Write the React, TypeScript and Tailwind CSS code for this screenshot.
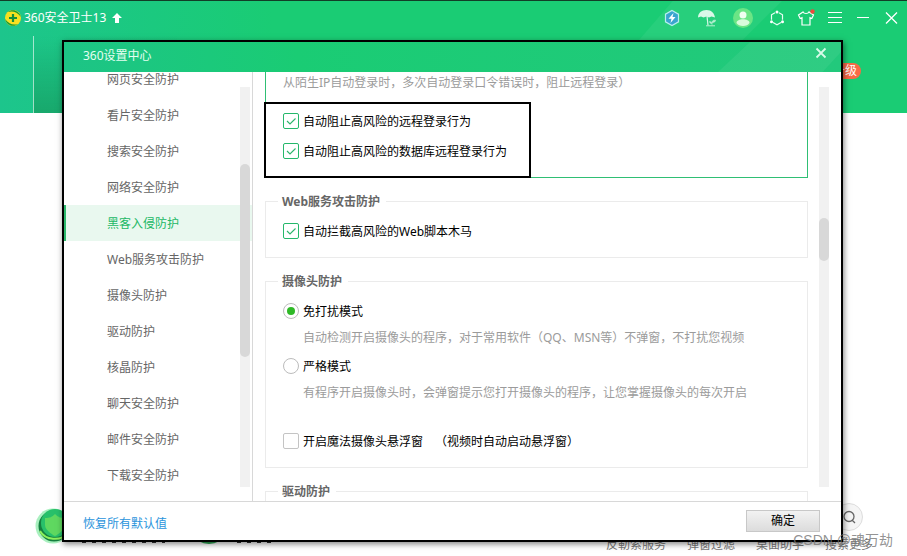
import type { ReactNode } from "react";

const navItems = [
    "网页安全防护",
    "看片安全防护",
    "搜索安全防护",
    "网络安全防护",
    "黑客入侵防护",
    "Web服务攻击防护",
    "摄像头防护",
    "驱动防护",
    "核晶防护",
    "聊天安全防护",
    "邮件安全防护",
    "下载安全防护",
];

function Check({ label, note, checked = false }: { label: string; note?: string; checked?: boolean }) {
    return (
        <label className="flex h-4 items-center gap-1 text-black">
            <span className="relative flex size-4 shrink-0">
                <input
                    type="checkbox"
                    defaultChecked={checked}
                    className="peer size-4 appearance-none rounded-xs border border-[#c4c4c4] bg-white checked:border-[#25b86b]"
                />
                <svg viewBox="0 0 16 16" className="pointer-events-none absolute inset-0 hidden size-4 peer-checked:block">
                    <path d="M4 8l3 3 5.5-5.500" fill="none" stroke="#2cb56c" strokeWidth="1.100" />
                </svg>
            </span>
            <span className="pt-0.5">{label}</span>
            {note && <span className="ml-2 pt-0.5">{note}</span>}
        </label>
    );
}

function Mode({ label, hint, checked = false }: { label: string; hint: string; checked?: boolean }) {
    return (
        <div>
            <label className="flex h-4 items-center gap-1 text-black">
                <span className="relative flex size-4 shrink-0">
                    <input
                        type="radio"
                        name="camera-mode"
                        defaultChecked={checked}
                        className="peer size-4 appearance-none rounded-full border border-[#bcbcbc] bg-white"
                    />
                    <span className="pointer-events-none absolute inset-1 hidden rounded-full bg-[#2fb927] peer-checked:block" />
                </span>
                <span className="pt-0.5">{label}</span>
            </label>
            <p className="mt-[11px] pl-5 text-[#9b9b9b]">{hint}</p>
        </div>
    );
}

function Group({ title, children }: { title: string; children?: ReactNode }) {
    return (
        <fieldset className="border border-[#ebebeb] px-[17px]">
            <legend className="-ml-[5px] px-1 pr-1.5 pt-0.5 font-bold text-[#666]">{title}</legend>
            {children}
        </fieldset>
    );
}

function TitleBar() {
    return (
        <header className="flex h-[34px] items-center justify-between pl-1 pr-2 text-white">
            <div className="flex items-center gap-0.5">
                <svg viewBox="0 0 18 18" className="size-[18px]">
                    <circle cx="9" cy="9" r="8" fill="#f7e021" />
                    <path d="M4 3C8-.5 15 1 17 8C13 3 9 1.500 4 3zM14 15C10 18.500 3 17 1 10C5 15 9 16.500 14 15z" fill="#159a36" />
                    <path d="M9 5v8M5 9h8" stroke="#14903a" strokeWidth="2.200" />
                </svg>
                <h1>360安全卫士13</h1>
                <svg viewBox="0 0 10 10" className="ml-1 size-[10px]">
                    <path d="M5 0l5 5H7v5H3V5H0z" fill="white" />
                </svg>
            </div>
            <div className="flex items-center gap-3">
                <button type="button" aria-label="加速" className="mr-1">
                    <svg viewBox="0 0 18 18" className="size-[18px]">
                        <path d="M9 1.500l6.500 3.700v7.600L9 16.500l-6.500-3.700V5.200z" fill="#3aa5cf" stroke="#b9eef0" strokeWidth="1.200" />
                        <path d="M10.500 4L5.500 9.800h3L7.500 14l5-6h-3z" fill="white" />
                    </svg>
                </button>
                <button type="button" aria-label="保护伞" className="mr-1">
                    <svg viewBox="0 0 20 18" className="h-[18px] w-5">
                        <path d="M1 8.500C1 4 4.500 1 9.500 1S17.500 4.500 18 8.500L14.500 7.500 12 8.500 9.500 7.500 6.500 8.500 4 7.500z" fill="#d9f8e8" />
                        <path d="M10 7l1 9.500" stroke="#d9f8e8" strokeWidth="1.200" />
                        <path d="M9 16.800h9" stroke="#b6efd1" />
                        <path d="M15 16.500v-3.500M15 14.500c-2 0-2.500-1-2.500-2 1.500 0 2.500.7 2.500 2zM15 13.500c0-1.800 1.500-2.500 3.500-2.500 0 1.800-1.200 2.700-3.500 2.500z" fill="#b6efd1" stroke="#b6efd1" strokeWidth="0.600" />
                    </svg>
                </button>
                <button type="button" aria-label="账户" className="mr-1">
                    <svg viewBox="0 0 20 20" className="size-5">
                        <circle cx="10" cy="10" r="10" fill="#6be585" />
                        <circle cx="10" cy="7" r="3.500" fill="#effff0" />
                        <path d="M3.500 15c0-5 13-5 13 0-2 4-11 4-13 0z" fill="#d8fbdc" />
                    </svg>
                </button>
                <button type="button" aria-label="社区">
                    <svg viewBox="0 0 16 16" className="size-4">
                        <path d="M6 2.800L2.500 4.800v5M4 12.500L8 14.700l4-2.200M13.500 9.800v-5L10 2.800" fill="none" stroke="#e8fff4" strokeWidth="1.200" />
                        <g fill="white">
                            <circle cx="8" cy="2" r="1.500" />
                            <circle cx="2.500" cy="11.800" r="1.500" />
                            <circle cx="13.500" cy="11.800" r="1.500" />
                        </g>
                    </svg>
                </button>
                <button type="button" aria-label="换肤">
                    <svg viewBox="0 0 18 18" className="size-[18px]">
                        <path d="M6 3L1.500 6l1.700 3.500L5 8.700V16h8V8.700l1.800.8L16.500 6 12 3c-1 2-5 2-6 0z" fill="none" stroke="white" strokeWidth="1.200" />
                        <circle cx="15.500" cy="2.500" r="2.200" fill="#ee4a3c" />
                    </svg>
                </button>
                <button type="button" aria-label="菜单">
                    <svg viewBox="0 0 16 16" className="size-4">
                        <path d="M1 2.500h14M1 7.500h14M1 12.500h14" stroke="white" />
                    </svg>
                </button>
                <button type="button" aria-label="最小化">
                    <svg viewBox="0 0 16 16" className="size-4">
                        <path d="M2 7.500h12" stroke="white" />
                    </svg>
                </button>
                <button type="button" aria-label="关闭">
                    <svg viewBox="0 0 16 16" className="size-4">
                        <path d="M3 2.500l11 11M14 2.500l-11 11" stroke="white" strokeWidth="1.300" />
                    </svg>
                </button>
            </div>
        </header>
    );
}

function SettingsDialog() {
    return (
        <div
            role="dialog"
            aria-label="360设置中心"
            className="absolute bottom-[14px] left-[62px] right-16 top-10 flex flex-col border-2 border-black bg-white shadow-[1px_2px_6px_rgba(0,0,0,0.5)]"
        >
            <div className="relative flex h-[30px] shrink-0 items-center justify-between bg-linear-to-r from-[#1dc486] via-[#1acc74] via-30% to-[#22c97c] pl-[19px] pr-3 text-[#e4fff1]">
                <div className="absolute inset-y-0 right-0 w-[123px] bg-white/6 [clip-path:polygon(26%_0,100%_0,100%_33%,85%_100%,0_100%)]" />
                <h2 className="-mt-0.5">360设置中心</h2>
                <button type="button" aria-label="关闭设置" className="relative -mt-2">
                    <svg viewBox="0 0 16 16" className="size-4">
                        <path d="M3.500 3.500l9 9M12.500 3.500l-9 9" stroke="#d8fbe9" strokeWidth="1.800" />
                    </svg>
                </button>
            </div>

            <div className="flex min-h-0 flex-1">
                <nav className="relative flex w-[189px] shrink-0 flex-col justify-end overflow-hidden border-r border-[#d8d8d8] pb-2">
                    {navItems.map((item) => (
                        <a
                            key={item}
                            href="#"
                            className={
                                item === "黑客入侵防护"
                                    ? "flex h-9 shrink-0 items-center border-l-2 border-[#2cb96c] bg-[#e9f8ef] pl-[41px] pt-0.5 text-[#22b866]"
                                    : "flex h-9 shrink-0 items-center pl-[43px] pt-0.5 text-[#666]"
                            }
                        >
                            {item}
                        </a>
                    ))}
                    <div className="absolute bottom-[14px] right-0.5 top-[15px] w-[10px] bg-[#f1f1f1]">
                        <div className="mt-[77px] h-[193px] rounded-full bg-[#d8d8d8]" />
                    </div>
                </nav>

                <main className="flex min-w-0 flex-1 gap-[11px] overflow-hidden pl-3 pr-3">
                    <div className="flex min-w-0 flex-1 flex-col gap-[14px]">
                        <fieldset className="relative border-x border-b border-solid border-[#2fbf74] px-[17px] pb-[18px] pt-[3px]">
                            <p className="text-[#9b9b9b]">从陌生IP自动登录时，多次自动登录口令错误时，阻止远程登录）</p>
                            <div className="mt-[22px] flex flex-col gap-[14px]">
                                <Check label="自动阻止高风险的远程登录行为" checked />
                                <Check label="自动阻止高风险的数据库远程登录行为" checked />
                            </div>
                            <div className="pointer-events-none absolute -bottom-px -left-0.5 top-[30px] w-[267px] border-2 border-black" />
                        </fieldset>

                        <Group title="Web服务攻击防护">
                            <div className="pb-[18px] pt-[13px]">
                                <Check label="自动拦截高风险的Web脚本木马" checked />
                            </div>
                        </Group>

                        <Group title="摄像头防护">
                            <div className="flex flex-col gap-3 pb-[18px] pt-[13px]">
                                <Mode
                                    label="免打扰模式"
                                    hint="自动检测开启摄像头的程序，对于常用软件（QQ、MSN等）不弹窗，不打扰您视频"
                                    checked
                                />
                                <Mode
                                    label="严格模式"
                                    hint="有程序开启摄像头时，会弹窗提示您打开摄像头的程序，让您掌握摄像头的每次开启"
                                />
                                <div className="mt-5">
                                    <Check label="开启魔法摄像头悬浮窗" note="（视频时自动启动悬浮窗）" />
                                </div>
                            </div>
                        </Group>

                        <Group title="驱动防护">
                            <div className="h-8" />
                        </Group>
                    </div>
                    <div className="mb-[14px] mt-[15px] w-[10px] shrink-0 bg-[#f1f1f1]">
                        <div className="mt-[131px] h-[43px] rounded-full bg-[#d8d8d8]" />
                    </div>
                </main>
            </div>

            <div className="flex h-[39px] shrink-0 items-center justify-between border-t border-[#d8d8d8] pl-[19px] pr-[21px]">
                <a href="#" className="pt-1.5 text-[#2a94dc]">恢复所有默认值</a>
                <button type="button" className="h-[22px] w-[74px] border border-[#c8c8c8] bg-linear-to-b from-[#f2f2f2] to-[#dcdcdc] text-black">
                    确定
                </button>
            </div>
        </div>
    );
}

export default function App() {
    return (
        <div className="relative flex h-screen flex-col justify-between overflow-hidden bg-white font-['Noto_Sans','Noto_Sans_CJK_SC',sans-serif] text-xs leading-4">
            <div className="relative h-[113px] bg-linear-to-r from-[#1dc58c] via-[#1acc74] via-30% to-[#1acc74]">
                <div className="absolute right-[124px] top-0 h-10 w-36 bg-white/6 [clip-path:polygon(24%_0,100%_0,72%_100%,0_100%)]" />
                <div className="absolute bottom-0 left-[33px] h-[77px] w-36 border-l border-white/60 bg-linear-to-b from-[#1acc74]/0 to-[#18a86c]" />
                <div className="relative border-t border-[#123d27]">
                    <TitleBar />
                </div>
                <span className="absolute right-[46px] top-[63px] h-4 rounded-full bg-[#f96a47] pl-3 pr-1 text-white">升级</span>
            </div>

            <div className="relative flex items-end justify-between px-[34px] pb-[3px]">
                <svg viewBox="0 0 240 42" className="mb-1 h-[42px] w-[240px]">
                    <circle cx="19" cy="19" r="17.500" fill="#a9f0bf" />
                    <circle cx="20" cy="19" r="15.500" fill="#15803f" />
                    <circle cx="21" cy="16" r="14" fill="#28c06a" />
                    <path d="M11 11c5 0 7-1 10-4 3 3 5 4 10 4v7c0 6-10 11-10 11s-10-5-10-11z" fill="#5fd860" />
                    <path d="M6 24c5 9 20 11 29 2" fill="none" stroke="#8ef05d" strokeWidth="2" />
                    <ellipse cx="175" cy="28" rx="14" ry="9" fill="#2eaa56" />
                    <path d="M48 35.500h83M203 35.500h35" stroke="#333" strokeDasharray="4 6" />
                </svg>
                <div className="flex gap-[21px] text-[#777]">
                    <span>反勒索服务</span>
                    <span>弹窗过滤</span>
                    <span>桌面助手</span>
                    <span>搜索更多</span>
                </div>
                <button type="button" aria-label="搜索" className="absolute bottom-[25px] right-[44px] flex size-7 items-center justify-center rounded-full border border-[#ddd] bg-[#f5f5f5]">
                    <svg viewBox="0 0 16 16" className="size-4">
                        <path d="M11 11l3 3M13 7.500A5 5 0 113 7.500a5 5 0 0110 0z" fill="none" stroke="#666" strokeWidth="1.300" />
                    </svg>
                </button>
            </div>

            <SettingsDialog />
            <div className="absolute bottom-1 right-[14px] font-['Liberation_Sans','Noto_Sans_CJK_SC',sans-serif] text-sm leading-6 text-[#777]/80">
                CSDN @魂万劫
            </div>
        </div>
    );
}
